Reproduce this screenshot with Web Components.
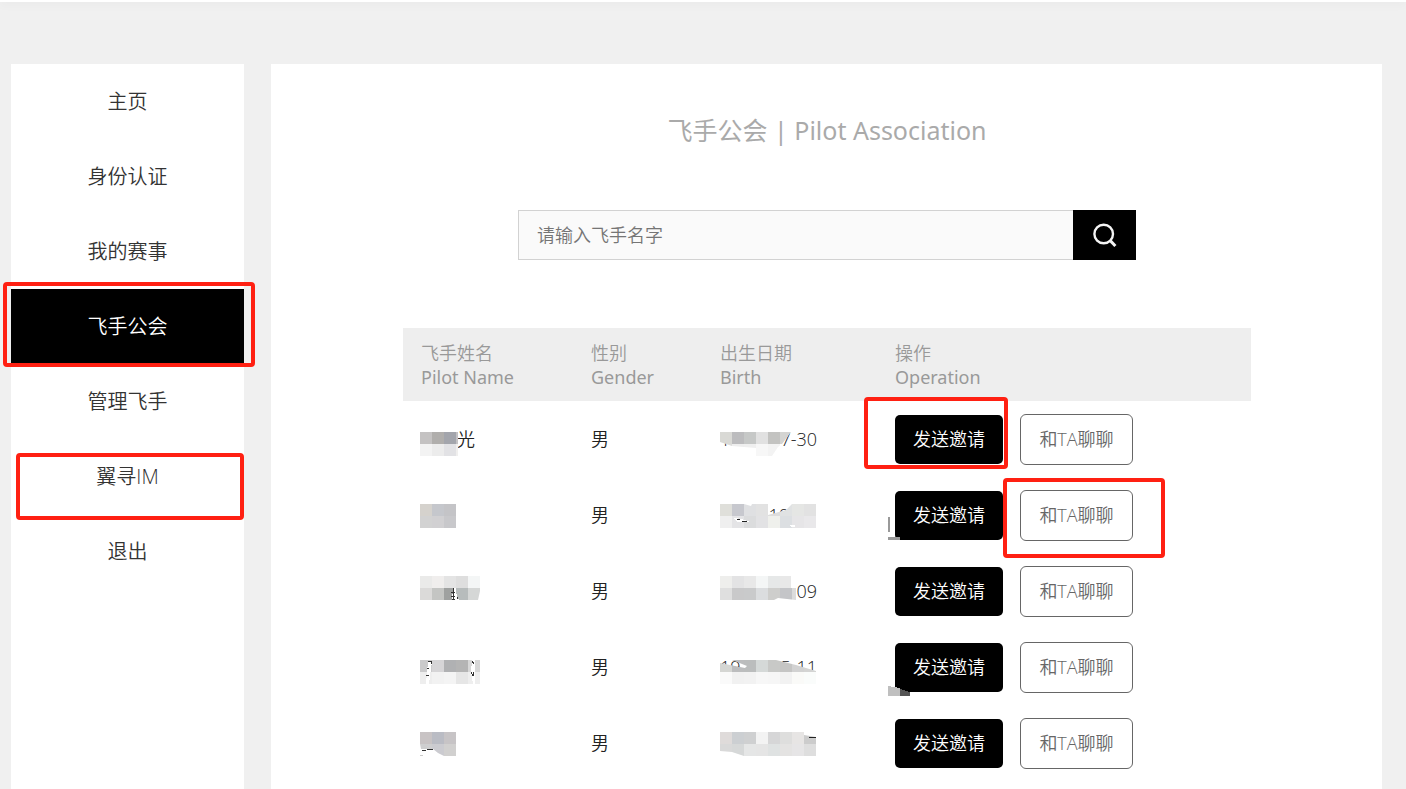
<!DOCTYPE html>
<html lang="zh-CN">
<head>
<meta charset="utf-8">
<meta name="viewport" content="width=device-width, initial-scale=1">
<title>飞手公会 | Pilot Association</title>
<style>
  html, body { margin: 0; }
  body {
    background: #f0f0f0;
    color: #333;
    font-family: "Open Sans", "Noto Sans CJK SC", sans-serif;
    font-weight: 350;
  }
</style>
</head>
<body>
<club-page>
  <side-nav slot="side">
    <nav-item>主页</nav-item>
    <nav-item>身份认证</nav-item>
    <nav-item>我的赛事</nav-item>
    <nav-item active>飞手公会<mark-frame slot="mark" style="--t:-7px;--l:-8px;--w:252px;--h:85px"></mark-frame></nav-item>
    <nav-item>管理飞手</nav-item>
    <nav-item>翼寻IM<mark-frame slot="mark" style="--t:14px;--l:5px;--w:228px;--h:67px"></mark-frame></nav-item>
    <nav-item>退出</nav-item>
  </side-nav>
  <page-title>飞手公会 | Pilot Association</page-title>
  <pilot-search></pilot-search>
  <pilot-table></pilot-table>
</club-page>

<script>
function define(name, html, setup) {
  const template = document.createElement('template');
  template.innerHTML = html;
  customElements.define(name, class extends HTMLElement {
    constructor() {
      super();
      this.attachShadow({ mode: 'open' }).append(template.content.cloneNode(true));
    }
    connectedCallback() { if (setup) setup(this, this.shadowRoot); }
  });
}

define('club-page', `
  <style>
    :host { display: flex; flex-direction: column; min-height: 100vh; }
    header { height: 2px; background: #fff; box-shadow: 0 1px 10px rgba(0,0,0,.1); }
    .body { flex: 1; display: flex; gap: 27px; padding: 62px 24px 0 11px; }
    aside { flex: 0 0 233px; background: #fff; }
    main { flex: 1; min-width: 0; background: #fff; padding: 48px 131px 8px 132px; }
  </style>
  <header></header>
  <div class="body">
    <aside><slot name="side"></slot></aside>
    <main><slot></slot></main>
  </div>`);

define('side-nav', `
  <style>:host { display: block; } nav { display: flex; flex-direction: column; }</style>
  <nav><slot></slot></nav>`);

define('nav-item', `
  <style>
    :host { display: block; position: relative; }
    a { display: block; padding-top: 1px; line-height: 74px; text-align: center; font-size: 20px; color: #333; text-decoration: none; }
    :host([active]) a { background: #000; color: #fff; }
  </style>
  <a href="#"><slot></slot></a><slot name="mark"></slot>`);

/* Red call-out rectangle laid over the element it points at. */
define('mark-frame', `
  <style>
    :host {
      display: block; position: absolute; z-index: 2; box-sizing: border-box; pointer-events: none;
      top: var(--t); left: var(--l); width: var(--w); height: var(--h);
      border: 4px solid #ff2012; border-radius: 4px;
    }
  </style>`);

define('page-title', `
  <style>
    :host { display: block; }
    h1 { margin: 0; text-align: center; font-family: "Noto Sans", "Noto Sans CJK SC", sans-serif; font-size: 25px; line-height: 36px; font-weight: 400; color: #aaa; }
  </style>
  <h1><slot></slot></h1>`);

define('pilot-search', `
  <style>
    :host { display: block; margin: 62px auto 68px; max-width: 618px; }
    form { display: flex; height: 50px; }
    input {
      flex: 1; min-width: 0; box-sizing: border-box; margin: 0; padding: 0 18px;
      border: 1px solid #d2d2d2; border-right: 0; border-radius: 0; background: #fafafa;
      font: inherit; font-size: 18px; color: #333; outline: 0;
    }
    input::placeholder { color: #757575; opacity: 1; }
    button { width: 63px; padding: 0; border: 0; background: #000; display: grid; place-items: center; }
  </style>
  <form>
    <input type="text" placeholder="请输入飞手名字" aria-label="请输入飞手名字">
    <button type="button" aria-label="搜索">
      <svg width="26" height="26" viewBox="0 0 26 26" fill="none" stroke="#f4f4f4" stroke-width="2.4">
        <circle cx="11.7" cy="12" r="9.3"/><path d="M18 18.4l5.4 5.6" stroke-width="3"/>
      </svg>
    </button>
  </form>`);

define('action-button', `
  <style>
    :host { display: inline-block; }
    button {
      display: block; box-sizing: border-box; width: 108px; height: 49px; padding: 0;
      border: 0; border-radius: 5px; background: #000; color: #fff;
      font: inherit; font-size: 18px; line-height: 24px; white-space: nowrap;
    }
    :host([outline]) button { width: 113px; height: 51px; border: 1px solid #666; border-radius: 6px; background: #fff; color: #666; }
  </style>
  <button type="button"><slot></slot></button>`);

/* Privacy mosaic: 12px blocks, one string of colours per line, cut to an optional outline. */
const mosaics = {
  n1: { y: 31, rows: ['#c4c2c2 #b0aeac #a3a5ac #c4c2c4', '#f3f3f3 #ececec #e2e2e5 #f0efee'], cut: '0,0 38,0 38,24 0,24' },
  n2: { y: 27, rows: ['#d5d2cd #c5c7cc #c4c4c7', '#d2d2d2 #d1d0d2 #c8c8cb'] },
  n3: { y: 23, rows: ['#eaeae9 #f0eeed #e4e4e4 #dedede #f4f6f6', '#dbdad9 #c4c5c3 #9fa1a0 #b7bcbc #d5d7d6'], cut: '0,0 60,0 60,15 58,24 0,24',
        extra: '<path d="M33 12h3v12h-4zM36 17l3 7h-3z" fill="#fff"/><path d="M31 16h4M31 20h4M32 23h3M33 12v12M37 21v2" stroke="#333"/>' },
  n4: { y: 31, rows: ['#cacacb #d6d5d7 #b0b1b3 #b4b4b4 #d7d7d7', '#eeeeee #f2f2f2 #f4f4f4 #e6e6e6 #eeeeee'],
        extra: '<path d="M8 1h4l-3 23H6zM52 0h3v24h-2l-2-12z" fill="#fff"/><path d="M8 1h3v3M7 8h2M6 15h3M52 1l2 3M51 12l2 4 1-4" fill="none" stroke="#333"/>' },
  n5: { y: 27, rows: ['#c8c3c4 #babcc4 #c7c4c6', '#cececf #cbcbd0 #d1d0cf'], cut: '0,0 36,0 36,24 24,24 18,21 13,17 1,17 0,12',
        extra: '<path d="M2 18h4M7 17h6" stroke="#333"/><path d="M0 23h3" stroke="#ccc"/>' },
  d1: { y: 31, rows: ['#d9d9d5 #bcbcbe #c6c8c7 #e1e1e1 #c3c3c1 #d4d4d2', '#dcdcda #eeeeee #efefef #f7f7f7 #f3f3f3 #ffffff'], cut: '0,0 71,0 62,12 58,15 52,24 36,24 36,16 12,14 0,10' },
  d2: { y: 27, rows: ['#dfdfda #c7c8ce #dfe0e2 #e2e2e2 #dddddd #e0e2e3 #e5e6e4 #e2e2e2', '#efefef #e4e4e6 #dbdcdd #e2e2e4 #eff0ec #dcdfe2 #e6e5e7 #e9e8ea'], cut: '0,0 24,0 31,2 32,0 48,0 48,11 66,6 72,0 96,0 96,24 0,24',
        extra: '<path d="M13 14l9 1 8 3H18z" fill="#fff"/><path d="M17 15l3 1M22 17l5 1" stroke="#222"/><path d="M69 21h6v2h-4z" fill="#fff"/>' },
  d3: { y: 23, rows: ['#eeeeec #e3e3e4 #e8e8e8 #f4f6f6 #e6e8e8 #e8e8e8 #ffffff', '#dfdfdf #c9c9ca #c9cacb #dbdddf #cececc #c4c5c8 #dcdcdc'], cut: '0,0 71,0 71,12 76,12 76,24 58,22 54,24 0,24' },
  d4: { y: 31, rows: ['#d5d6d3 #bcbdbe #bbbdbd #d5d9d8 #c8c9c7 #c5c5c4 #d2d2d2 #d4d4d3', '#fafafa #f1f1f1 #f2f2f2 #f7f7f7 #f6f6f6 #f2f2f2 #fafaf8 #fafcfb'], cut: '0,3 10,5 25,8 27,6 12,0 56,0 76,5 96,11 96,24 0,24' },
  d5: { y: 27, rows: ['#dfdbda #cccfd2 #cfd0d1 #f3f3f3 #d6d6d7 #dededd #e7e5e4 #cccccc', '#d9d9d9 #d6d8d8 #e5e6e6 #e5e5e5 #dfe2e2 #e4e3e2 #e6e5e6 #dedede'], cut: '0,0 84,0 84,3 96,5 96,24 24,24 12,20 0,19',
        extra: '<path d="M89 5h7" stroke="#222"/>' },
  o2: { y: 40, rows: [], extra: '<path d="M1 0v15" stroke="#999" stroke-width="2"/><path d="M0 21h12" stroke="#999" stroke-width="3"/>' },
  o4: { y: 57, rows: [], extra: '<path d="M0 0l12 2v8H0z" fill="#bfbfbf"/><path d="M12 3l10 3v4H12z" fill="#555"/>' }
};

define('mosaic-cover', `
  <style>
    :host { display: block; position: absolute; top: 0; left: var(--l, 18px); pointer-events: none; }
    svg { display: block; }
  </style>
  <svg width="100" height="76" viewBox="0 0 100 76" shape-rendering="crispEdges" aria-hidden="true"></svg>`,
  (host, root) => {
    const m = mosaics[host.getAttribute('kind')];
    const blocks = m.rows.map((line, j) => line.split(' ').map((c, i) =>
      `<rect x="${i * 12}" y="${j * 12}" width="12" height="12" fill="${c}"/>`).join('')).join('');
    const clip = m.cut ? `<clipPath id="cut"><polygon points="${m.cut}"/></clipPath>` : '';
    root.querySelector('svg').innerHTML =
      `${clip}<g transform="translate(0 ${m.y})"><g ${m.cut ? 'clip-path="url(#cut)"' : ''}>${blocks}</g>${m.extra || ''}</g>`;
  });

const pilots = [
  { name: '光', from: '1', to: '7-30', over: '<mark-frame style="--t:-4px;--l:-13px;--w:144px;--h:72px"></mark-frame>' },
  { name: '', from: '', to: '10', shift: true,
    over: '<mosaic-cover kind="o2" style="--l:11px"></mosaic-cover><mark-frame style="--t:1px;--l:126px;--w:162px;--h:80px"></mark-frame>' },
  { name: '', from: '', to: '09', over: '' },
  { name: '', from: '19', to: '05-11', over: '<mosaic-cover kind="o4" style="--l:11px"></mosaic-cover>' },
  { name: '', from: '', to: '', over: '' }
];

define('pilot-table', `
  <style>
    :host { display: block; }
    table { width: 100%; table-layout: fixed; border-collapse: collapse; font-size: 18px; }
    .name { width: 170px; } .gender { width: 129px; } .birth { width: 175px; }
    th, td { box-sizing: border-box; padding: 0 0 0 18px; text-align: left; vertical-align: middle; }
    th { height: 73px; background: #eee; color: #999; font-weight: inherit; line-height: 24px; }
    th span { display: block; font-family: "Noto Sans", sans-serif; font-weight: 400; }
    td { position: relative; height: 76px; color: #222; line-height: 24px; }
    .who { padding-left: 36px; }
    .date { display: flex; justify-content: space-between; width: 97px; }
    .shift { padding-right: 28px; box-sizing: border-box; }
    .ops { display: flex; align-items: center; gap: 17px; }
  </style>
  <table>
    <colgroup><col class="name"><col class="gender"><col class="birth"><col></colgroup>
    <thead><tr>
      <th scope="col">飞手姓名<span>Pilot Name</span></th><th scope="col">性别<span>Gender</span></th>
      <th scope="col">出生日期<span>Birth</span></th><th scope="col">操作<span>Operation</span></th>
    </tr></thead>
    <tbody></tbody>
  </table>`,
  (host, root) => {
    root.querySelector('tbody').innerHTML = pilots.map((p, i) => `
      <tr>
        <td><span class="who">${p.name}</span><mosaic-cover kind="n${i + 1}" style="--l:17px"></mosaic-cover></td>
        <td>男</td>
        <td><div class="date${p.shift ? ' shift' : ''}"><span>${p.from}</span><span>${p.to}</span></div><mosaic-cover kind="d${i + 1}"></mosaic-cover></td>
        <td><div class="ops"><action-button>发送邀请</action-button><action-button outline>和TA聊聊</action-button></div>${p.over}</td>
      </tr>`).join('');
  });
</script>
</body>
</html>
